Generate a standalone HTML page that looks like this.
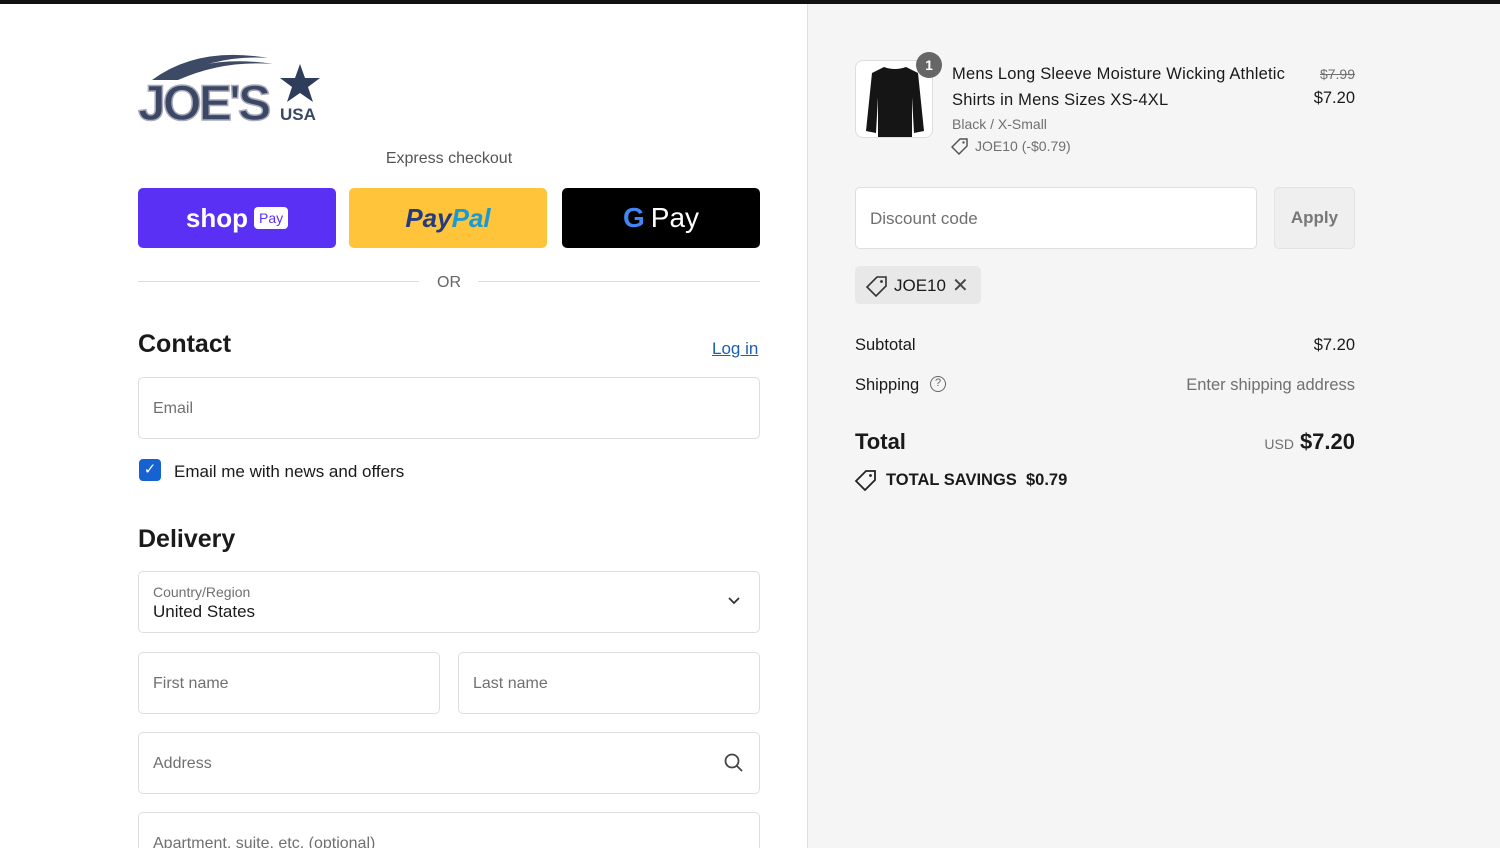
<!DOCTYPE html>
<html style="width:1500px;height:848px;overflow:hidden"><head><style>
*{box-sizing:border-box;margin:0;padding:0}
body{width:1500px;height:848px;overflow:hidden;background:#fff;font-family:"Liberation Sans",sans-serif;color:#1a1a1a;position:relative}
.abs{position:absolute}
.top{left:0;top:0;width:1500px;height:4px;background:#111}
.right{left:807px;top:4px;width:693px;height:844px;background:#f5f5f5;border-left:1px solid #e0e0e0}
.inp{position:absolute;border:1px solid #dedede;border-radius:5px;background:#fff;font-size:16px;color:#707070;padding-left:14px;display:flex;align-items:center}
.btn{position:absolute;top:188px;width:198px;height:60px;border-radius:5px;display:flex;align-items:center;justify-content:center}
</style></head><body>
<div class="abs top"></div>
<div class="abs right"></div>

<svg class="abs" style="left:138px;top:50px" width="186" height="76" viewBox="0 0 186 76">
<path d="M14 30 Q60 -4 130 8 Q80 4 30 30Z" fill="#3c4a66"/>
<path d="M26 30 Q70 4 135 14 Q85 10 40 30Z" fill="#3c4a66"/>
<polygon points="162,14 167,28 182,28 170,37 175,52 162,43 149,52 154,37 142,28 157,28" fill="#2f3d5c"/>
<text x="0" y="70" font-family="Liberation Sans" font-weight="bold" font-size="50" fill="#3a4866" stroke="#aab" stroke-width="1.5" letter-spacing="-3">JOE'S</text>
<text x="142" y="70" font-family="Liberation Sans" font-weight="bold" font-size="17" fill="#3a4866">USA</text>
</svg>

<div class="abs" style="left:138px;width:622px;top:150px;text-align:center;font-size:16px;color:#555">Express checkout</div>
<div class="btn" style="left:138px;background:#5a31f4;color:#fff;font-weight:bold;font-size:26px">shop<span style="background:#fff;color:#5a31f4;font-size:14px;border-radius:4px;padding:3px 5px;margin-left:6px;font-weight:normal">Pay</span></div>
<div class="btn" style="left:349px;background:#ffc439;font-weight:bold;font-style:italic;font-size:26px"><span style="color:#253b80">Pay</span><span style="color:#179bd7">Pal</span></div>
<div class="btn" style="left:562px;background:#000;color:#fff;font-size:28px"><span style="font-weight:bold;color:#4285f4;margin-right:6px">G</span>Pay</div>

<div class="abs" style="left:138px;top:281px;width:281px;height:1px;background:#ddd"></div>
<div class="abs" style="left:478px;top:281px;width:282px;height:1px;background:#ddd"></div>
<div class="abs" style="left:420px;width:58px;top:274px;text-align:center;font-size:16px;color:#666">OR</div>

<div class="abs" style="left:138px;top:330px;font-size:25px;font-weight:bold">Contact</div>
<div class="abs" style="left:712px;top:339px;font-size:17px;color:#1a5fb4;text-decoration:underline">Log in</div>
<div class="inp" style="left:138px;top:377px;width:622px;height:62px;padding-top:2px">Email</div>
<div class="abs" style="left:139px;top:459px;width:22px;height:22px;background:#1662d0;border-radius:4px;color:#fff;font-size:15px;text-align:center;line-height:22px">✓</div>
<div class="abs" style="left:174px;top:462px;font-size:17px">Email me with news and offers</div>

<div class="abs" style="left:138px;top:525px;font-size:25px;font-weight:bold">Delivery</div>
<div class="inp" style="left:138px;top:571px;width:622px;height:62px;display:block;padding-top:12px"><div style="font-size:14px;color:#707070">Country/Region</div><div style="font-size:17px;color:#1a1a1a;margin-top:2px">United States</div></div>
<svg class="abs" style="left:727px;top:596px" width="14" height="10"><path d="M2 2 L7 7 L12 2" stroke="#333" stroke-width="1.8" fill="none"/></svg>
<div class="inp" style="left:138px;top:652px;width:302px;height:62px;padding-top:2px">First name</div>
<div class="inp" style="left:458px;top:652px;width:302px;height:62px;padding-top:2px">Last name</div>
<div class="inp" style="left:138px;top:732px;width:622px;height:62px;padding-top:2px">Address</div>
<svg class="abs" style="left:723px;top:752px" width="22" height="22"><circle cx="9" cy="9" r="6.5" stroke="#444" stroke-width="1.8" fill="none"/><path d="M14 14 L19 19" stroke="#444" stroke-width="1.8"/></svg>
<div class="inp" style="left:138px;top:812px;width:622px;height:36px;align-items:flex-start;padding-top:22px;border-bottom:none;border-radius:5px 5px 0 0;overflow:hidden">Apartment, suite, etc. (optional)</div>

<div class="abs" style="left:855px;top:60px;width:78px;height:78px;border:1px solid #ddd;border-radius:8px;background:#fff;overflow:hidden">
<svg width="78" height="78"><path d="M28 6 Q39 10 50 6 L62 12 L68 70 L58 72 L56 36 L56 76 L22 76 L22 36 L20 72 L10 70 L16 12Z" fill="#151515"/></svg></div>
<div class="abs" style="left:916px;top:52px;width:26px;height:26px;border-radius:13px;background:#666;color:#fff;font-size:14px;font-weight:bold;text-align:center;line-height:26px">1</div>
<div class="abs" style="left:952px;top:61px;font-size:16.5px;line-height:26px;width:350px;letter-spacing:0.2px">Mens Long Sleeve Moisture Wicking Athletic Shirts in Mens Sizes XS-4XL</div>
<div class="abs" style="left:952px;top:116px;font-size:14px;color:#707070">Black / X-Small</div>
<svg class="abs" style="left:951px;top:137px" width="18" height="18"><path d="M9 2 H16 V9 L8 17 L1 10Z" stroke="#555" stroke-width="1.5" fill="none"/><circle cx="12.5" cy="5.5" r="1.2" fill="#555"/></svg>
<div class="abs" style="left:975px;top:138px;font-size:14px;color:#707070">JOE10 (-$0.79)</div>
<div class="abs" style="left:1300px;width:55px;top:66px;text-align:right;font-size:14px;color:#707070;text-decoration:line-through">$7.99</div>
<div class="abs" style="left:1290px;width:65px;top:89px;text-align:right;font-size:16.5px">$7.20</div>

<div class="inp" style="left:855px;top:187px;width:402px;height:62px;padding-top:2px;font-size:17px">Discount code</div>
<div class="abs" style="left:1274px;top:187px;width:81px;height:62px;border:1px solid #e3e3e3;border-radius:5px;background:#efefef;color:#777;font-size:17px;font-weight:bold;display:flex;align-items:center;justify-content:center">Apply</div>
<div class="abs" style="left:855px;top:266px;width:126px;height:38px;background:#e8e8e8;border-radius:5px"></div>
<svg class="abs" style="left:866px;top:275px" width="22" height="22"><path d="M11 2 H20 V11 L10 21 L1 12Z" stroke="#333" stroke-width="1.6" fill="none"/><circle cx="15.5" cy="6.5" r="1.4" fill="#333"/></svg>
<div class="abs" style="left:894px;top:276px;font-size:17px">JOE10</div>
<div class="abs" style="left:952px;top:273px;font-size:20px;color:#444">✕</div>

<div class="abs" style="left:855px;top:336px;font-size:16.5px">Subtotal</div>
<div class="abs" style="left:1290px;width:65px;top:336px;text-align:right;font-size:16.5px">$7.20</div>
<div class="abs" style="left:855px;top:376px;font-size:16.5px">Shipping</div>
<div class="abs" style="left:930px;top:376px;width:16px;height:16px;border:1.5px solid #666;border-radius:8px;font-size:11px;text-align:center;line-height:13px;color:#666">?</div>
<div class="abs" style="left:1100px;width:255px;top:376px;text-align:right;font-size:16.5px;color:#707070">Enter shipping address</div>
<div class="abs" style="left:855px;top:429px;font-size:22px;font-weight:bold">Total</div>
<div class="abs" style="left:1150px;width:205px;top:429px;text-align:right"><span style="font-size:14px;color:#707070;margin-right:6px">USD</span><span style="font-size:22px;font-weight:bold">$7.20</span></div>
<svg class="abs" style="left:855px;top:469px" width="22" height="22"><path d="M11 2 H20 V11 L10 21 L1 12Z" stroke="#222" stroke-width="1.8" fill="none"/><circle cx="15.5" cy="6.5" r="1.4" fill="#222"/></svg>
<div class="abs" style="left:886px;top:471px;font-size:16.5px;font-weight:bold">TOTAL SAVINGS&nbsp; $0.79</div>
</body></html>
